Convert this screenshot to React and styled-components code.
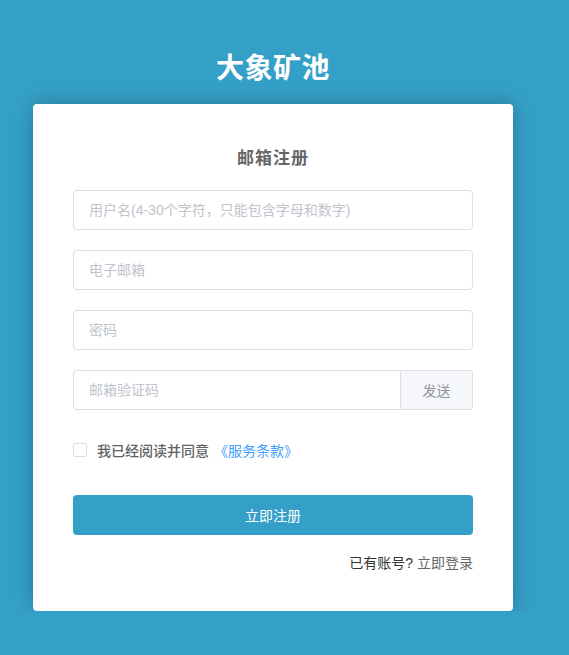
import React from "react";
import styled, { createGlobalStyle } from "styled-components";

const Global = createGlobalStyle`
  html, body { margin: 0; padding: 0; background: #35a0c7; }
  body { font-family: "Liberation Sans", "Noto Sans CJK SC", sans-serif; }
  * { box-sizing: border-box; }
  input::placeholder { color: #c0c4cc; }
`;

const Page = styled.div`
  padding: 49px 0 0 33px;
  overflow: hidden;
`;

const Column = styled.div`
  width: 480px;
`;

const Title = styled.h1`
  margin: 0 0 15px;
  text-align: center;
  color: #fff;
  font-size: 28px;
  line-height: 40px;
  font-weight: bold;
  letter-spacing: 0.5px;
`;

const Card = styled.div`
  background: #fff;
  border-radius: 4px;
  padding: 43px 40px 38px;
  box-shadow: 0 0 20px rgba(0, 0, 0, 0.25);
`;

const Heading = styled.h2`
  margin: 0 0 19px;
  text-align: center;
  color: #666;
  font-size: 17px;
  line-height: 24px;
  font-weight: bold;
  letter-spacing: 1px;
`;

const Field = styled.div`
  display: flex;
  height: 40px;
  margin-bottom: ${(p) => (p.$last ? 0 : 20)}px;
`;

const Input = styled.input`
  flex: 1;
  min-width: 0;
  height: 40px;
  border: 1px solid #dcdfe6;
  border-radius: ${(p) => (p.$append ? "4px 0 0 4px" : "4px")};
  padding: 0 15px;
  font-size: 14px;
  font-family: inherit;
  color: #606266;
  outline: none;
  background: #fff;
`;

const Append = styled.div`
  width: 72px;
  display: flex;
  align-items: center;
  justify-content: center;
  background: #f5f7fa;
  border: 1px solid #dcdfe6;
  border-left: none;
  border-radius: 0 4px 4px 0;
  color: #909399;
  font-size: 14px;
`;

const Agree = styled.label`
  display: flex;
  align-items: center;
  height: 20px;
  margin-top: 30px;
  font-size: 14px;
  font-weight: 500;
  color: #606266;
`;

const Box = styled.span`
  width: 14px;
  height: 14px;
  border: 1px solid #dcdfe6;
  border-radius: 2px;
  background: #fff;
  margin-right: 10px;
`;

const Link = styled.a`
  color: #409eff;
  margin-left: 5px;
  font-weight: normal;
  text-decoration: none;
`;

const Submit = styled.button`
  display: block;
  width: 100%;
  height: 40px;
  margin-top: 35px;
  border: none;
  border-radius: 4px;
  background: #35a0c7;
  color: #fff;
  font-size: 14px;
  font-family: inherit;
`;

const LoginLine = styled.div`
  margin-top: 18px;
  text-align: right;
  font-size: 14px;
  line-height: 20px;
  color: #333;
`;

const LoginLink = styled.span`
  color: #666;
`;

export default function App() {
  return (
    <>
      <Global />
      <Page>
        <Column>
          <Title>大象矿池</Title>
          <Card>
            <Heading>邮箱注册</Heading>
            <Field>
              <Input placeholder="用户名(4-30个字符，只能包含字母和数字)" />
            </Field>
            <Field>
              <Input placeholder="电子邮箱" />
            </Field>
            <Field>
              <Input type="password" placeholder="密码" />
            </Field>
            <Field $last>
              <Input $append placeholder="邮箱验证码" />
              <Append>发送</Append>
            </Field>
            <Agree>
              <Box />
              我已经阅读并同意
              <Link href="#">《服务条款》</Link>
            </Agree>
            <Submit>立即注册</Submit>
            <LoginLine>
              已有账号? <LoginLink>立即登录</LoginLink>
            </LoginLine>
          </Card>
        </Column>
      </Page>
    </>
  );
}
